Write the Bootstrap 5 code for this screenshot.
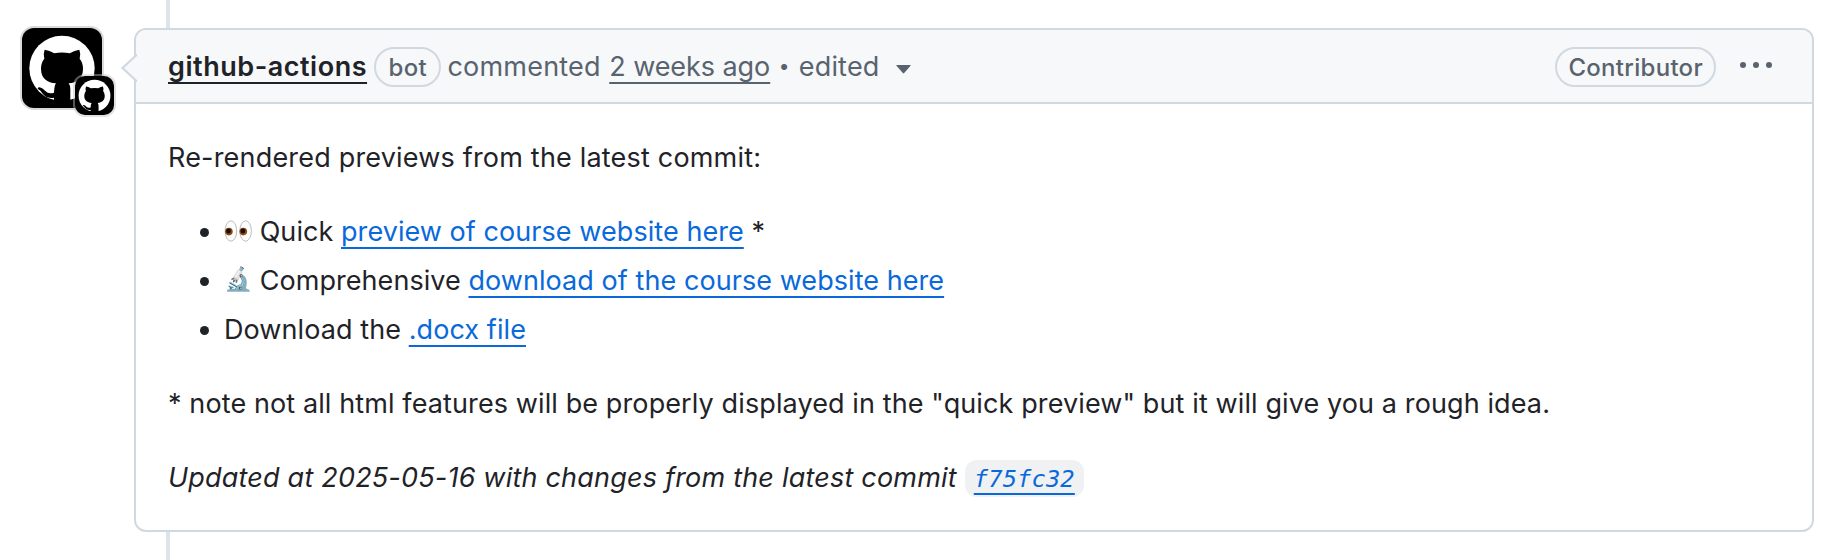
<!DOCTYPE html>
<html lang="en">
<head>
<meta charset="utf-8">
<meta name="viewport" content="width=device-width, initial-scale=1">
<title>github-actions comment</title>
<link href="https://cdn.jsdelivr.net/npm/bootstrap@5.3.0/dist/css/bootstrap.min.css" rel="stylesheet">
<style>
:root{--line:#d1d9e0;--muted:#59636e;--fg:#1f2328;--link:#0969da}
body{font-family:Inter,"Liberation Sans",sans-serif;font-size:27px;line-height:42px;color:var(--fg);background:#fff;height:560px;overflow:hidden}
a{text-decoration:underline 2px;text-underline-offset:6px;text-decoration-skip-ink:none;color:var(--link)}
.timeline-item{padding:28px 20px 28px 22px;gap:32px}
.timeline-item::before{content:"";position:absolute;left:166px;top:0;bottom:0;width:4px;background:#dfe4e9}
.avatar-box{width:80px;height:80px;border-radius:12px;background:#000;box-shadow:0 0 0 2px #dadada}
.avatar-box svg{width:80px;height:80px;display:block}
.avatar-box .avatar-mini svg{width:39px;height:39px}
.avatar-mini{left:53px;top:48px;width:39px;height:39px;border-radius:10px;background:#000;box-shadow:0 0 0 2px rgba(190,190,190,.45)}
.comment{border:2px solid var(--line);border-radius:12px;height:504px;background:#fff}
.comment-head{height:74px;border-bottom:2px solid var(--line);background:#f6f8fa;border-radius:10px 10px 0 0;padding:2px 40px 0 32px;color:var(--muted);letter-spacing:.2px}
.beak{left:-16px;top:23px}
.author{color:var(--fg);font-weight:600;letter-spacing:.53px}
.when{color:var(--muted);letter-spacing:-.07px;margin-left:8.5px}
.pill{border:2px solid var(--line);border-radius:20px;height:40px;line-height:37px;font-size:24px;font-weight:500;padding:0 11px;letter-spacing:.3px}
.pill-bot{margin-left:7px;padding:0 12.5px}
.sep-dot{width:10px;font-size:19px;letter-spacing:0;margin:0 10px 0 8.5px}
.comment-body{padding:33px 32px 0;letter-spacing:.06px}
.comment-body p,.comment-body ul{margin:0 0 32px}
.comment-body ul{padding-left:56px}
.comment-body li{height:42px}
.comment-body li+li{margin-top:7px}
.emoji-glyph{display:inline-block;width:28px;font-size:23px;line-height:24px;font-family:"Noto Color Emoji",sans-serif;letter-spacing:0;white-space:nowrap;vertical-align:3px}
.emoji-eyes{width:28px;height:24px;vertical-align:-1px}
.hash{font-family:"DejaVu Sans Mono",monospace;font-size:23.8px;letter-spacing:.1px;background:#eff1f3;border-radius:12px;padding:6px 9px 4px;color:var(--link);line-height:27px;margin-top:1px}
</style>
</head>
<body>
<svg class="d-none"><symbol id="mark" viewBox="0 0 240 240"><circle cx="120" cy="121" r="98" fill="#fff"/><path d="M68 65Q82 67 97 76Q120 71 143 76Q158 67 172 65Q177 77 173 92Q183 104 183 122C183 152 165 164 140 166Q145 172 145 184V226H96V209Q72 213 61 196Q56 187 47 182Q47 178 53 178Q62 180 70 189Q80 200 96 194Q97 172 102 166C76 164 57 152 57 122Q57 104 67 92Q63 77 68 65Z"/></symbol></svg>
<div class="timeline-item d-flex align-items-start position-relative">
  <div class="avatar-box position-relative flex-shrink-0">
    <svg><use href="#mark"/></svg>
    <div class="avatar-mini position-absolute"><svg><use href="#mark"/></svg></div>
  </div>
  <article class="comment flex-grow-1 position-relative">
    <header class="comment-head d-flex align-items-center">
      <svg class="beak position-absolute" width="17" height="30" viewBox="0 0 17 30"><path d="M17 1.5 2.5 15 17 28.5" fill="#f6f8fa" stroke="#d1d9e0" stroke-width="2.2"/></svg>
      <a class="author" href="#">github-actions</a>
      <span class="pill pill-bot">bot</span>
      <span style="margin-left:6px">commented</span>
      <a class="when" href="#">2 weeks ago</a>
      <span class="sep-dot">•</span>
      <span>edited</span>
      <svg width="15" height="9" viewBox="0 0 15 9" style="margin:4px 0 0 16px"><path d="M.8 0h13.4q.8 0 .3.7L8.2 8.1q-.7.7-1.4 0L.5.7Q0 0 .8 0Z" fill="#59636e"/></svg>
      <span class="pill ms-auto">Contributor</span>
      <svg width="32" height="6" viewBox="0 0 32 6" style="margin:-4px 0 0 24px"><g fill="#59636e"><circle cx="3" cy="3" r="3"/><circle cx="16" cy="3" r="3"/><circle cx="29" cy="3" r="3"/></g></svg>
    </header>
    <div class="comment-body">
      <p style="letter-spacing:.19px">Re-rendered previews from the latest commit:</p>
      <ul>
        <li><svg class="emoji-eyes" viewBox="0 0 28 24" role="img" aria-label="eyes"><g fill="#fdfdfd" stroke="#bdbdbd" stroke-width="1"><ellipse cx="6.9" cy="13" rx="5.8" ry="10.2"/><ellipse cx="21.6" cy="13" rx="5.8" ry="10.2"/></g><g fill="#8a4b12"><circle cx="4.9" cy="13.6" r="3.8"/><circle cx="19.3" cy="13.6" r="3.8"/></g><g fill="#1c0d05"><circle cx="4.5" cy="13" r="2.4"/><circle cx="18.9" cy="13" r="2.4"/></g></svg> Quick <a href="#">preview of course website here</a> *</li>
        <li><span class="emoji-glyph">🔬</span> Comprehensive <a href="#">download of the course website here</a></li>
        <li style="letter-spacing:.08px">Download the <a href="#">.docx file</a></li>
      </ul>
      <p style="letter-spacing:.11px">* note not all html features will be properly displayed in the "quick preview" but it will give you a rough idea.</p>
      <p class="mb-0 fst-italic d-flex align-items-center" style="letter-spacing:.2px"><span>Updated at 2025-05-16 with changes from the latest commit</span><a href="#" class="hash ms-2">f75fc32</a></p>
    </div>
  </article>
</div>
<script src="https://cdn.jsdelivr.net/npm/bootstrap@5.3.0/dist/js/bootstrap.bundle.min.js"></script>
</body>
</html>
